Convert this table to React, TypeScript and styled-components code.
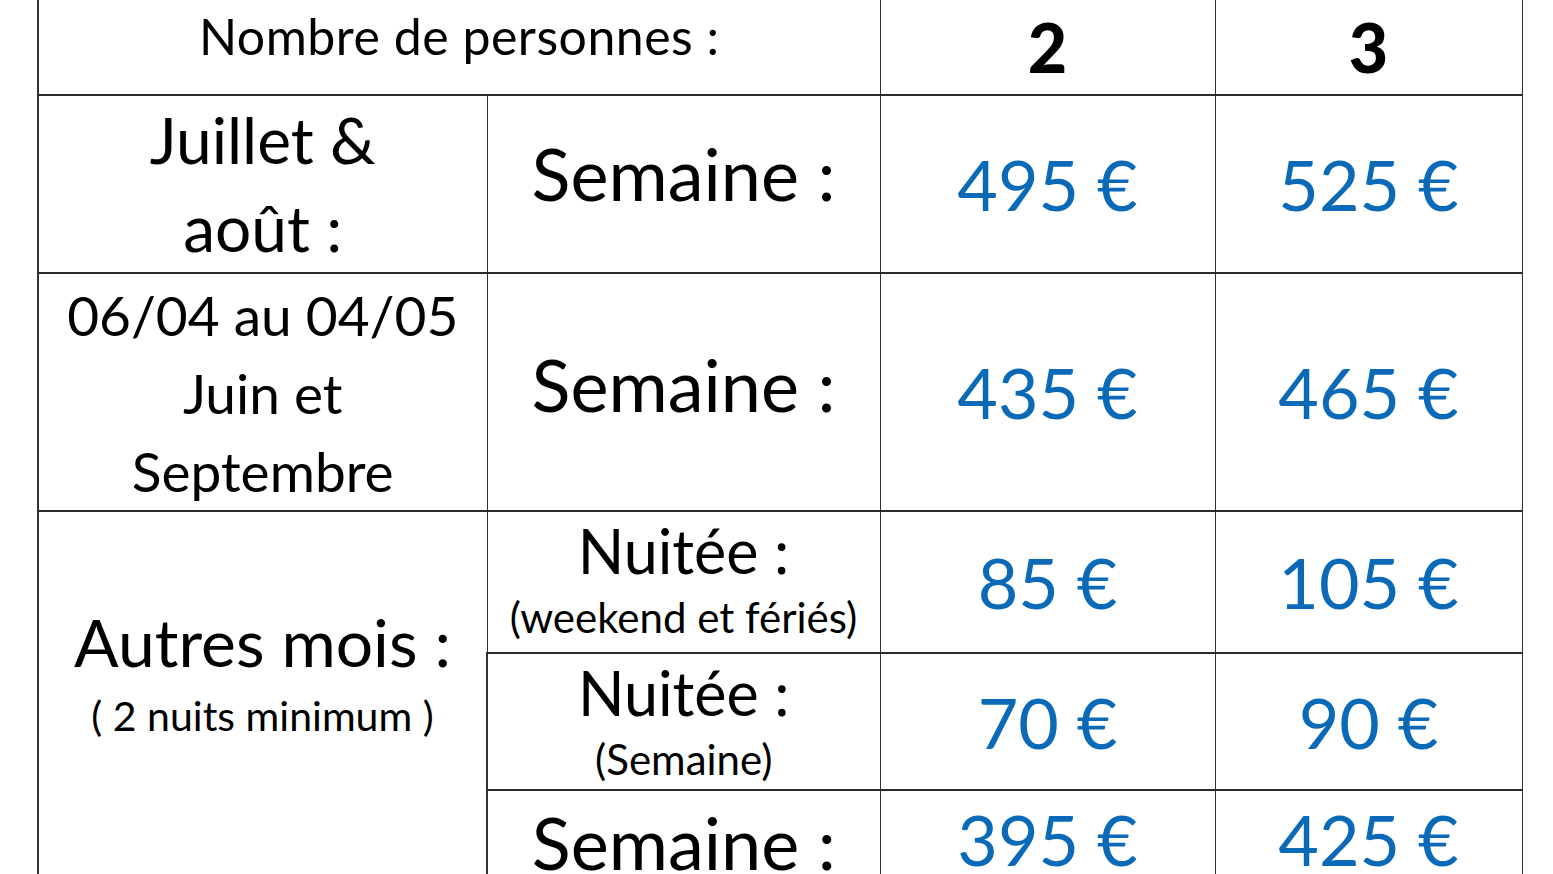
import styled, { createGlobalStyle } from 'styled-components';

const GlobalStyle = createGlobalStyle`
  html, body {
    margin: 0;
    padding: 0;
    background: #ffffff;
    overflow: hidden;
  }
  body {
    font-family: 'Lato', 'Liberation Sans', sans-serif;
    color: #000;
  }
`;

interface PriceRow {
  label: string;
  note?: string;
  height: number;
  two: string;
  three: string;
}

const otherMonths: PriceRow[] = [
  { label: 'Nuitée :', note: '(weekend et fériés)', height: 142, two: '85 €', three: '105 €' },
  { label: 'Nuitée :', note: '(Semaine)', height: 137, two: '70 €', three: '90 €' },
  { label: 'Semaine :', height: 140, two: '395 €', three: '425 €' },
];

export default function App() {
  return (
    <>
      <GlobalStyle />
      <Page>
        <Table>
          <colgroup>
            <col style={{ width: 449 }} />
            <col style={{ width: 393 }} />
            <col style={{ width: 335 }} />
            <col style={{ width: 307 }} />
          </colgroup>
          <tbody>
            <Row $h={95}>
              <HeadCell colSpan={2}>Nombre de personnes :</HeadCell>
              <CountCell>2</CountCell>
              <CountCell>3</CountCell>
            </Row>

            <Row $h={177}>
              <SeasonCell>
                <SeasonLine $size={64} $lh={88}>Juillet &amp;</SeasonLine>
                <SeasonLine $size={64} $lh={88}>août :</SeasonLine>
              </SeasonCell>
              <LabelCell $pb={22}>
                <Label $size={72}>Semaine :</Label>
              </LabelCell>
              <PriceCell>495 €</PriceCell>
              <PriceCell>525 €</PriceCell>
            </Row>

            <Row $h={238}>
              <SeasonCell $pt={2}>
                <SeasonLine $size={55} $lh={78}>06/04 au 04/05</SeasonLine>
                <SeasonLine $size={55} $lh={78}>Juin et</SeasonLine>
                <SeasonLine $size={55} $lh={78}>Septembre</SeasonLine>
              </SeasonCell>
              <LabelCell $pb={16}>
                <Label $size={72}>Semaine :</Label>
              </LabelCell>
              <PriceCell>435 €</PriceCell>
              <PriceCell>465 €</PriceCell>
            </Row>

            {otherMonths.map((r, i) => (
              <Row key={i} $h={r.height}>
                {i === 0 && (
                  <OtherCell rowSpan={otherMonths.length}>
                    <SeasonLine $size={66} $lh={76}>Autres mois :</SeasonLine>
                    <Note $size={41} $lh={72}>( 2 nuits minimum )</Note>
                  </OtherCell>
                )}
                {r.note ? (
                  <NightCell>
                    <Label $size={61} $lh={72}>{r.label}</Label>
                    <Note $size={42} $lh={60}>{r.note}</Note>
                  </NightCell>
                ) : (
                  <NightCell>
                    <Label $size={72} $lh={96}>{r.label}</Label>
                  </NightCell>
                )}
                <PriceCell $top={!r.note}>{r.two}</PriceCell>
                <PriceCell $top={!r.note}>{r.three}</PriceCell>
              </Row>
            ))}
          </tbody>
        </Table>
      </Page>
    </>
  );
}

const Page = styled.div`
  padding-left: 37px;
  width: 1553px;
  height: 874px;
  box-sizing: border-box;
`;

const Table = styled.table`
  border-collapse: collapse;
  table-layout: fixed;
  width: 1485px;

  td {
    border-left: 1.5px solid #333;
    border-right: 1.5px solid #333;
    border-bottom: 2px solid #2b2b2b;
    padding: 0;
    text-align: center;
    box-sizing: border-box;
  }
  td:first-child {
    border-left: 2px solid #333;
  }
`;

const Row = styled.tr<{ $h: number }>`
  height: ${(p) => p.$h}px;
`;

const HeadCell = styled.td`
  vertical-align: top;
  font-size: 50px;
  line-height: 72px;
  letter-spacing: 0.5px;
`;

const CountCell = styled.td`
  vertical-align: top;
  font-size: 68px;
  font-weight: 900;
  line-height: 94px;
`;

const SeasonCell = styled.td<{ $pt?: number }>`
  vertical-align: top;
  padding-top: ${(p) => p.$pt ?? 0}px !important;
`;

const OtherCell = styled.td`
  vertical-align: top;
  padding-top: 92px !important;
`;

const SeasonLine = styled.div<{ $size: number; $lh: number }>`
  font-size: ${(p) => p.$size}px;
  line-height: ${(p) => p.$lh}px;
  white-space: nowrap;
`;

const LabelCell = styled.td<{ $pb: number }>`
  vertical-align: middle;
  padding-bottom: ${(p) => p.$pb}px !important;
`;

const NightCell = styled.td`
  vertical-align: top;
  padding-top: 3px !important;
`;

const Label = styled.div<{ $size: number; $lh?: number }>`
  font-size: ${(p) => p.$size}px;
  line-height: ${(p) => (p.$lh ? `${p.$lh}px` : 'normal')};
  white-space: nowrap;
`;

const Note = styled.div<{ $size: number; $lh: number }>`
  font-size: ${(p) => p.$size}px;
  line-height: ${(p) => p.$lh}px;
  white-space: nowrap;
`;

const PriceCell = styled.td<{ $top?: boolean }>`
  vertical-align: ${(p) => (p.$top ? 'top' : 'middle')};
  font-size: 70px;
  line-height: ${(p) => (p.$top ? '96px' : 'normal')};
  color: #0b6ab8;
`;
